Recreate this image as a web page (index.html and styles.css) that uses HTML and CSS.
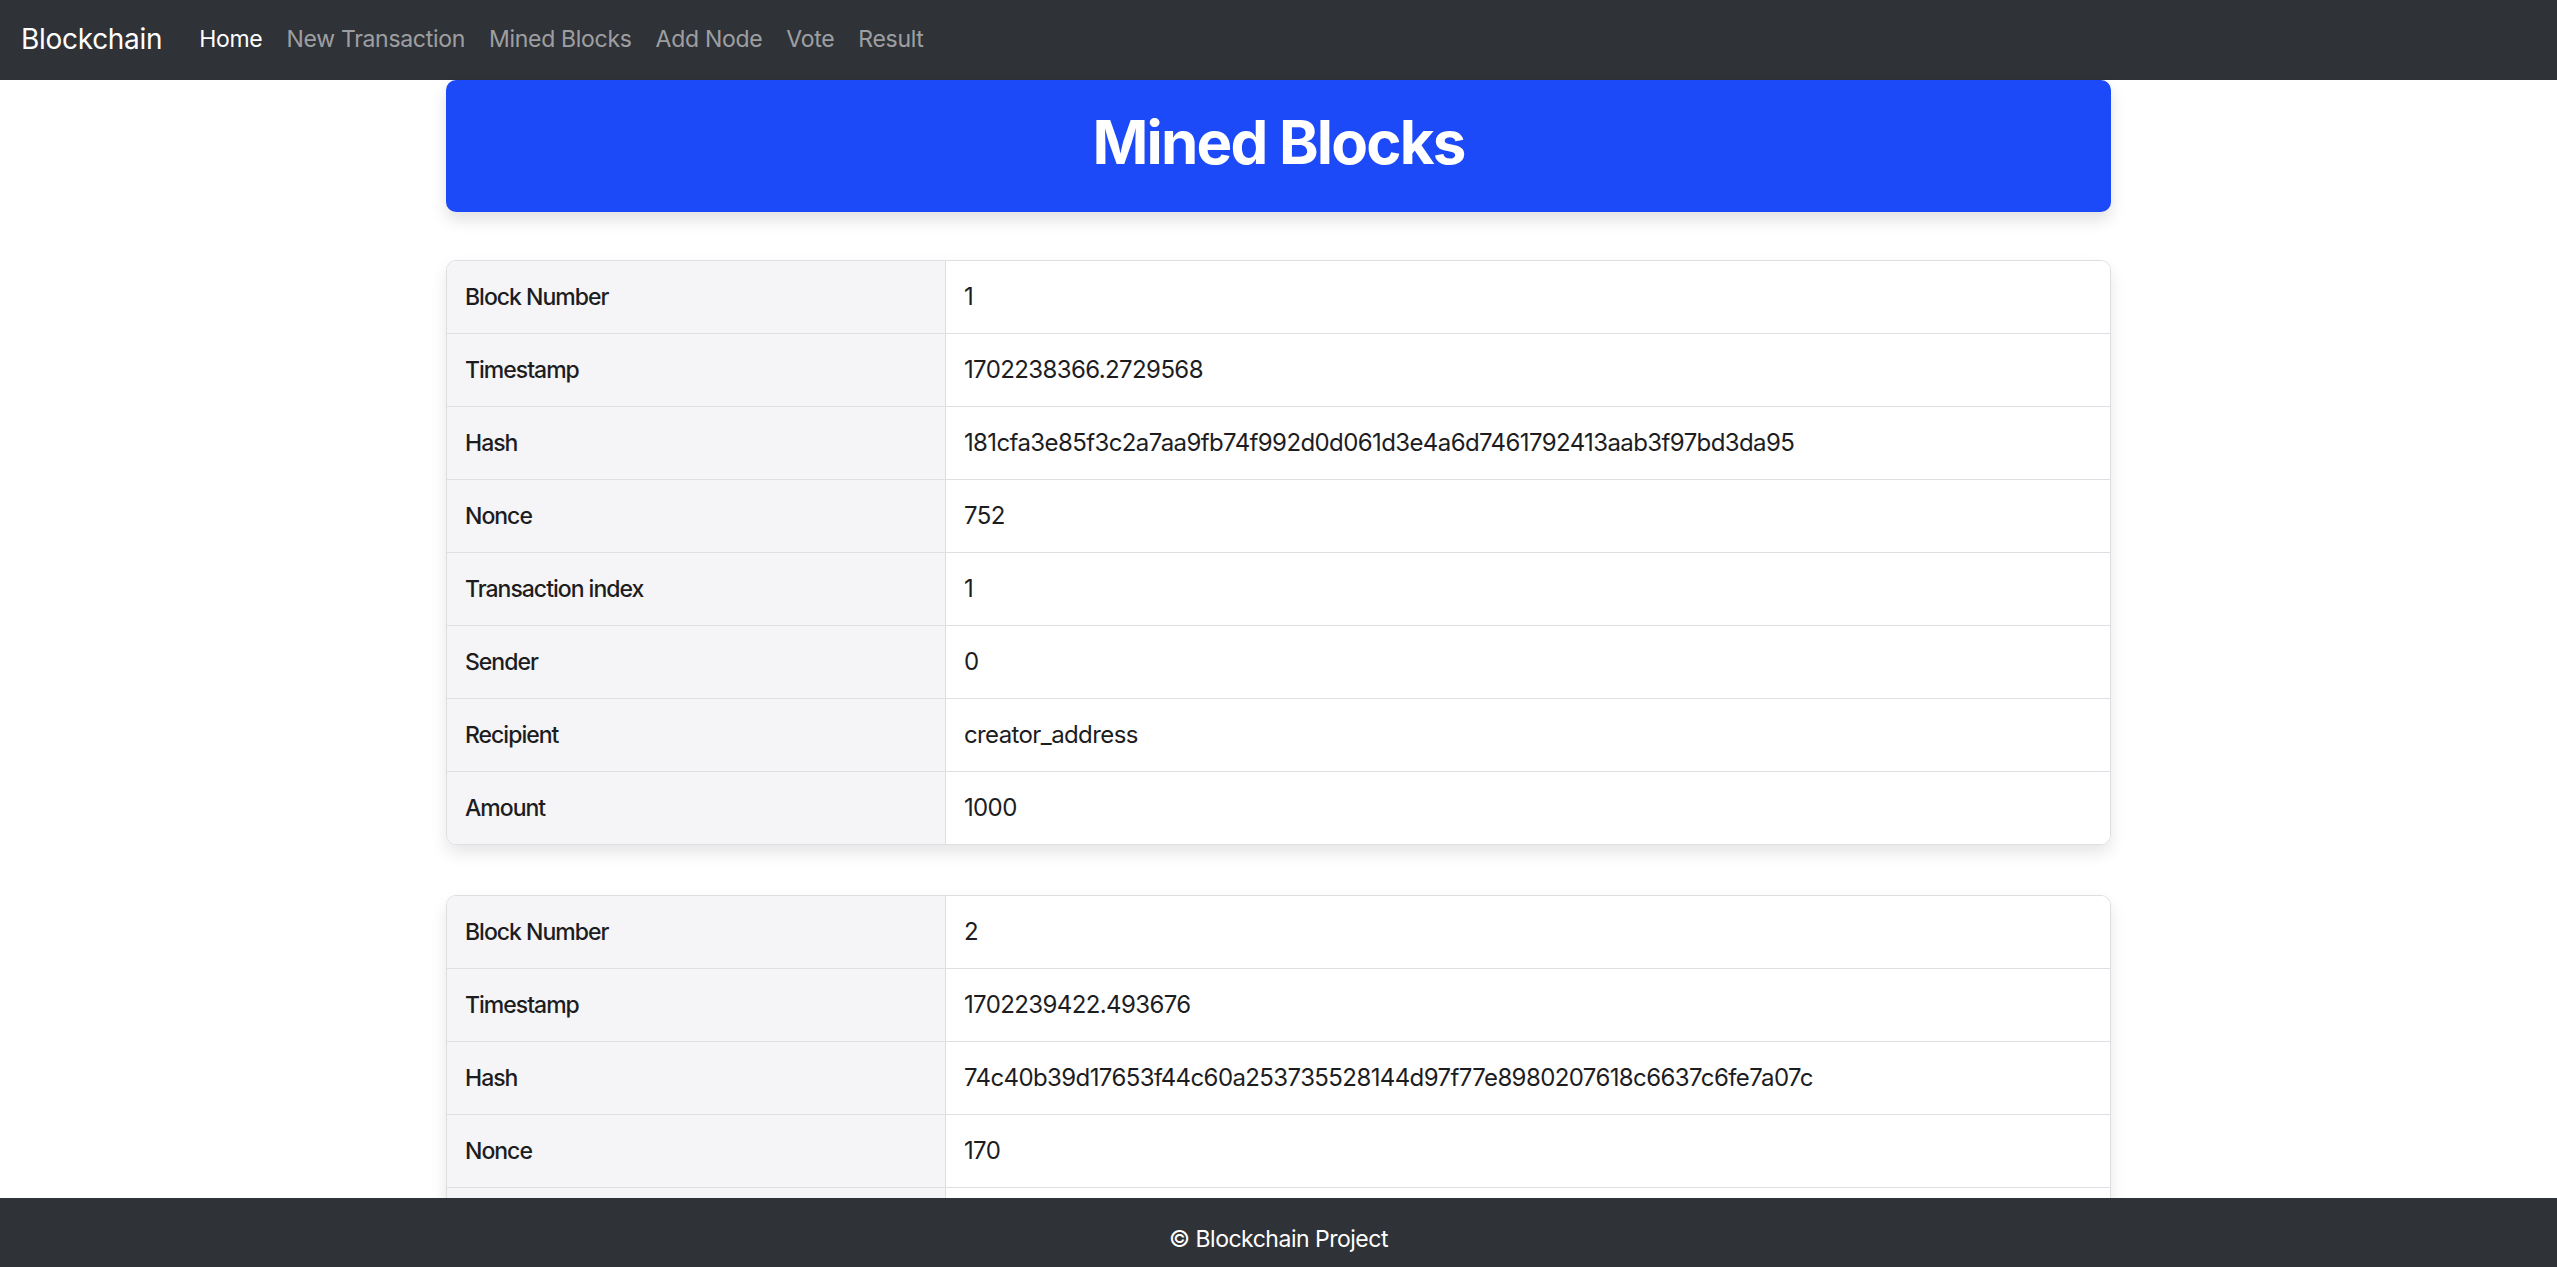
FILE: index.html
```html
<!DOCTYPE html>
<html lang="en">
<head>
<meta charset="utf-8">
<title>Mined Blocks</title>
<link rel="stylesheet" href="styles.css">
</head>
<body>
<nav class="navbar">
  <a class="brand" href="#">Blockchain</a>
  <ul class="nav">
    <li><a class="nav-link active" href="#">Home</a></li>
    <li><a class="nav-link" href="#">New Transaction</a></li>
    <li><a class="nav-link" href="#">Mined Blocks</a></li>
    <li><a class="nav-link" href="#">Add Node</a></li>
    <li><a class="nav-link" href="#">Vote</a></li>
    <li><a class="nav-link" href="#">Result</a></li>
  </ul>
</nav>
<main class="container">
  <header class="hero"><h1>Mined Blocks</h1></header>

  <table class="block">
    <tr><th>Block Number</th><td>1</td></tr>
    <tr><th>Timestamp</th><td>1702238366.2729568</td></tr>
    <tr><th>Hash</th><td>181cfa3e85f3c2a7aa9fb74f992d0d061d3e4a6d7461792413aab3f97bd3da95</td></tr>
    <tr><th>Nonce</th><td>752</td></tr>
    <tr><th>Transaction index</th><td>1</td></tr>
    <tr><th>Sender</th><td>0</td></tr>
    <tr><th>Recipient</th><td>creator_address</td></tr>
    <tr><th>Amount</th><td>1000</td></tr>
  </table>

  <table class="block">
    <tr><th>Block Number</th><td>2</td></tr>
    <tr><th>Timestamp</th><td>1702239422.493676</td></tr>
    <tr><th>Hash</th><td>74c40b39d17653f44c60a253735528144d97f77e8980207618c6637c6fe7a07c</td></tr>
    <tr><th>Nonce</th><td>170</td></tr>
    <tr><th>Transaction index</th><td>1</td></tr>
    <tr><th>Sender</th><td>0</td></tr>
    <tr><th>Recipient</th><td>creator_address</td></tr>
    <tr><th>Amount</th><td>1000</td></tr>
  </table>
</main>
<footer class="footer">© Blockchain Project</footer>
</body>
</html>
```
FILE: styles.css
```css
* { box-sizing: border-box; }
html, body { margin: 0; padding: 0; }
body {
  font-family: Inter, "Noto Sans", "Liberation Sans", sans-serif;
  font-size: 24px;
  line-height: 1.5;
  color: #1d1d1f;
  background: #ffffff;
  padding-bottom: 120px;
}
a { text-decoration: none; }

.navbar {
  height: 80px;
  background: #2f3237;
  display: flex;
  align-items: center;
  padding: 0 21px 2px;
}
.brand {
  color: #ffffff;
  font-size: 28px;
  margin-right: 25px;
  letter-spacing: -0.3px;
}
.nav {
  list-style: none;
  margin: 0;
  padding: 0;
  display: flex;
}
.nav-link {
  display: block;
  padding: 8px 12px;
  color: rgba(255, 255, 255, 0.55);
  font-size: 23px;
  letter-spacing: -0.3px;
}
.nav-link.active { color: #ffffff; }

.container {
  width: 1665px;
  margin: 0 auto;
}
.hero {
  background: #1c4af8;
  border-radius: 10px;
  box-shadow: 0 8px 16px rgba(0, 0, 0, 0.12);
  padding: 26px 0 34px;
  text-align: center;
}
.hero h1 {
  margin: 0;
  color: #ffffff;
  font-size: 60px;
  font-weight: 700;
  line-height: 1.2;
  letter-spacing: -1.8px;
}

.block {
  width: 100%;
  margin-top: 48px;
  border-collapse: separate;
  border-spacing: 0;
  border: 1px solid #dedee3;
  border-radius: 10px;
  overflow: hidden;
  box-shadow: 0 8px 16px rgba(0, 0, 0, 0.1);
}
.block + .block { margin-top: 50px; }
.block th, .block td {
  padding: 18px 18px;
  text-align: left;
  vertical-align: middle;
  border-bottom: 1px solid #dedee3;
  font-size: 24px;
  line-height: 36px;
}
.block tr:last-child th, .block tr:last-child td { border-bottom: none; }
.block th {
  width: 30%;
  font-weight: 500;
  font-size: 23px;
  letter-spacing: -1px;
  background: #f5f5f7;
  border-right: 1px solid #dedee3;
}
.block td {
  font-weight: 400;
  letter-spacing: -0.6px;
  background: #ffffff;
}

.footer {
  position: fixed;
  left: 0;
  right: 0;
  bottom: 0;
  height: 69px;
  padding-top: 14px;
  background: #2f3237;
  color: #ffffff;
  font-size: 23px;
  letter-spacing: -0.5px;
  display: flex;
  align-items: center;
  justify-content: center;
}
```
